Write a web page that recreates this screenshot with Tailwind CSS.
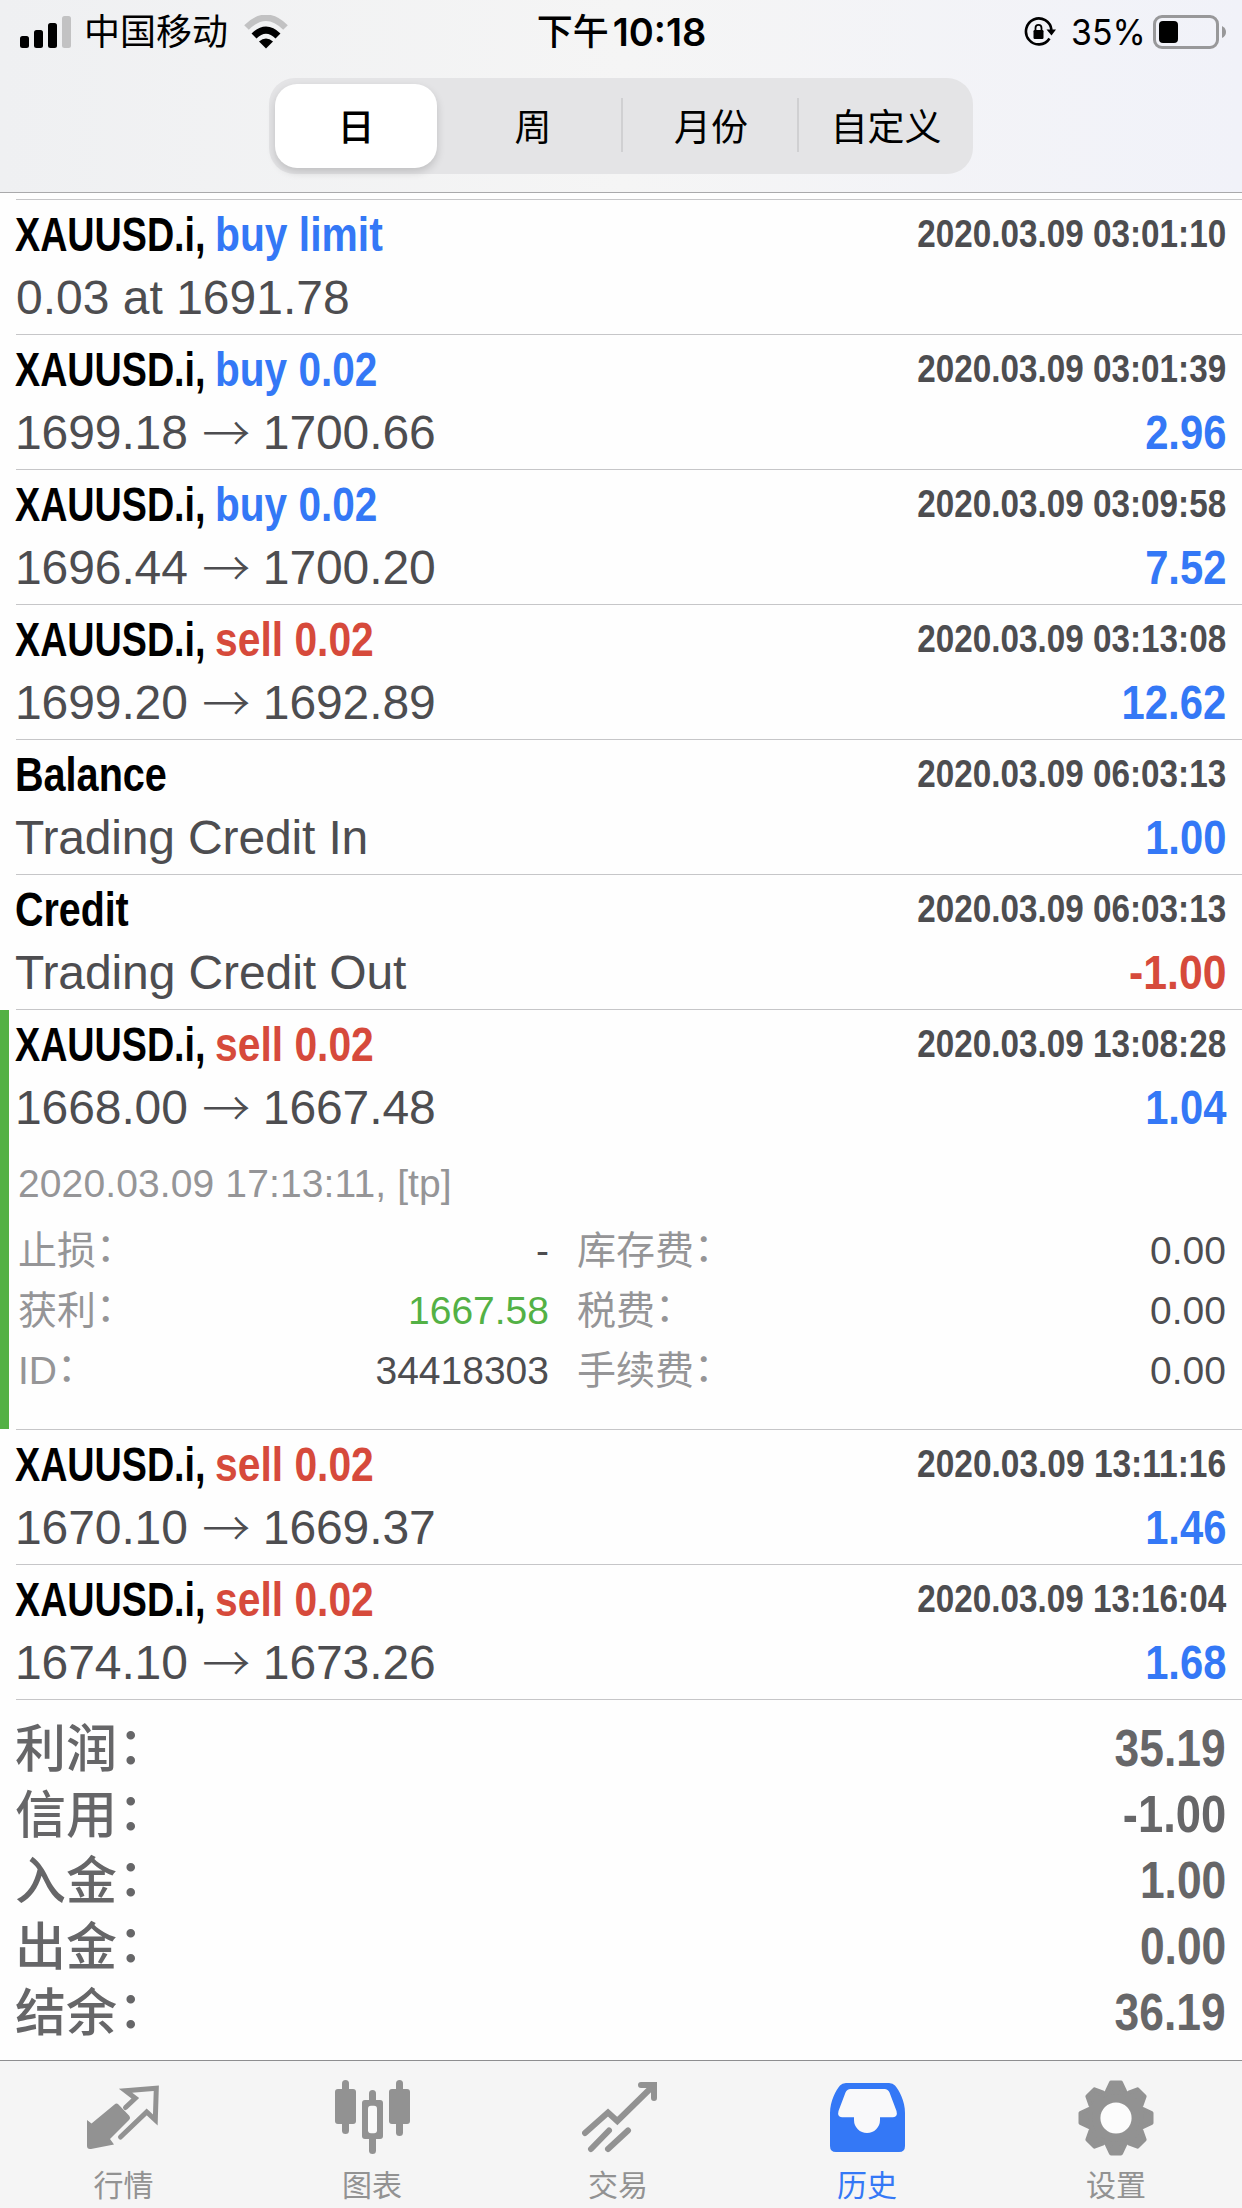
<!DOCTYPE html>
<html lang="zh-CN">
<head>
<meta charset="utf-8">
<title>历史</title>
<script src="https://cdn.jsdelivr.net/npm/@tailwindcss/browser@4"></script>
</head>
<body class="bg-white">
<div class="w-[1242px] h-[2208px] flex flex-col overflow-hidden bg-[#fefefe] font-['Liberation_Sans','Noto_Sans_CJK_SC',sans-serif] text-[48px] text-[#4d4d50] whitespace-nowrap">

  <header class="h-[193px] shrink-0 border-b border-[#a9a9ab] bg-linear-to-r from-[#eff0f2] via-[#f5f5f5] to-[#f1f2f9] text-black">
    <div class="h-[62px] grid grid-cols-3 items-center pl-5 pr-[15px] font-['Inter','Noto_Sans_CJK_SC',sans-serif] text-[36px] leading-[62px]">
      <div class="flex items-center">
        <svg class="w-[51px] h-8" viewBox="0 0 51 32"><rect x="0" y="20" width="9" height="12" rx="2.5"/><rect x="14" y="14" width="9" height="18" rx="2.5"/><rect x="28" y="7" width="9" height="25" rx="2.5"/><rect x="42" y="0" width="9" height="32" rx="2.5" fill="#c2c2c3"/></svg>
        <span class="ml-[13px] pt-px">中国移动</span>
        <svg class="ml-4 w-11 h-[34px]" viewBox="0 0 44 34"><path d="M2.5 12.5Q22 -7 41.500 12.500" fill="none" stroke="#c2c2c3" stroke-width="6.500"/><path d="M10 21Q22 9 34 21" fill="none" stroke="#000" stroke-width="7"/><path d="M15 26.500Q22 20.500 29 26.500L22 33.500Z"/></svg>
      </div>
      <div class="flex justify-center pr-1"><span class="font-medium">下午</span><span class="ml-1 text-[38px] font-semibold">10:18</span></div>
      <div class="flex items-center justify-end">
        <svg class="w-8 h-[30px]" viewBox="0 0 32 30"><path d="M25.500 21.500A12.800 13 0 1 1 27.500 13" fill="none" stroke="#000" stroke-width="2.600"/><path d="M22.500 12.500H32L27.500 18.500Z"/><rect x="9.500" y="13" width="10" height="9" rx="1.200"/><path d="M11.500 13.500V11a3 3.200 0 0 1 6 0v2.500" fill="none" stroke="#000" stroke-width="1.800"/></svg>
        <span class="ml-[15px] w-[76px]"><span class="inline-block origin-left scale-x-[0.94]">35%</span></span>
        <svg class="ml-1.5 w-[74px] h-[34px]" viewBox="0 0 74 34"><rect x="1.500" y="1.500" width="63" height="31" rx="7.500" fill="none" stroke="#98989a" stroke-width="3"/><rect x="6" y="6" width="19" height="22" rx="4"/><path d="M69 11Q73 13 73 17T69 23Z" fill="#98989a"/></svg>
      </div>
    </div>
    <div class="mt-4 mx-auto w-[704px] h-24 rounded-[26px] bg-[#e4e4e6] py-1.5 grid grid-cols-4 items-center text-center text-[37px] leading-[90px]">
      <div class="ml-1.5 h-[84px] w-[162px] rounded-[22px] bg-white shadow-[0_4px_8px_rgba(0,0,0,0.16)] font-medium">日</div>
      <div class="h-[84px]">周</div>
      <div class="h-[84px] pl-1 relative before:absolute before:left-0 before:top-[14px] before:h-[54px] before:w-[2px] before:bg-[#d0d0d2] after:absolute after:-right-0.5 after:top-[14px] after:h-[54px] after:w-[2px] after:bg-[#d0d0d2]">月份</div>
      <div class="h-[84px] pl-0.5">自定义</div>
    </div>
  </header>

  <main class="flex-1 pt-[6px]">
    <div class="ml-4 border-t border-[#c6c6c8]">

      <div class="h-[135px] border-b border-[#c6c6c8] pt-[5px] pr-4">
        <div class="h-[60px] leading-[60px] flex justify-between font-bold"><div class="flex -ml-px"><span class="w-[200px] text-black origin-left scale-x-[0.785]">XAUUSD.i,</span><span class="text-[#3478f6] origin-left scale-x-[0.85]">buy limit</span></div><div class="text-[39px] leading-[58px] origin-right scale-x-[0.853]">2020.03.09 03:01:10</div></div>
        <div class="h-[66px] leading-[66px]">0.03 at 1691.78</div>
      </div>

      <div class="h-[135px] border-b border-[#c6c6c8] pt-[5px] pr-4">
        <div class="h-[60px] leading-[60px] flex justify-between font-bold"><div class="flex -ml-px"><span class="w-[200px] text-black origin-left scale-x-[0.785]">XAUUSD.i,</span><span class="text-[#3478f6] origin-left scale-x-[0.845]">buy 0.02</span></div><div class="text-[39px] leading-[58px] origin-right scale-x-[0.853]">2020.03.09 03:01:39</div></div>
        <div class="h-[66px] leading-[66px] flex justify-between"><div class="flex -ml-px tracking-[-0.1px]"><span>1699.18</span><span class="w-[75px] pl-0.5 leading-[61px] text-center font-light font-['Noto_Sans_CJK_SC']">→</span><span>1700.66</span></div><div class="font-bold text-[#3478f6] origin-right scale-x-[0.87]">2.96</div></div>
      </div>

      <div class="h-[135px] border-b border-[#c6c6c8] pt-[5px] pr-4">
        <div class="h-[60px] leading-[60px] flex justify-between font-bold"><div class="flex -ml-px"><span class="w-[200px] text-black origin-left scale-x-[0.785]">XAUUSD.i,</span><span class="text-[#3478f6] origin-left scale-x-[0.845]">buy 0.02</span></div><div class="text-[39px] leading-[58px] origin-right scale-x-[0.853]">2020.03.09 03:09:58</div></div>
        <div class="h-[66px] leading-[66px] flex justify-between"><div class="flex -ml-px tracking-[-0.1px]"><span>1696.44</span><span class="w-[75px] pl-0.5 leading-[61px] text-center font-light font-['Noto_Sans_CJK_SC']">→</span><span>1700.20</span></div><div class="font-bold text-[#3478f6] origin-right scale-x-[0.87]">7.52</div></div>
      </div>

      <div class="h-[135px] border-b border-[#c6c6c8] pt-[5px] pr-4">
        <div class="h-[60px] leading-[60px] flex justify-between font-bold"><div class="flex -ml-px"><span class="w-[200px] text-black origin-left scale-x-[0.785]">XAUUSD.i,</span><span class="text-[#d64a3b] origin-left scale-x-[0.85]">sell 0.02</span></div><div class="text-[39px] leading-[58px] origin-right scale-x-[0.853]">2020.03.09 03:13:08</div></div>
        <div class="h-[66px] leading-[66px] flex justify-between"><div class="flex -ml-px tracking-[-0.1px]"><span>1699.20</span><span class="w-[75px] pl-0.5 leading-[61px] text-center font-light font-['Noto_Sans_CJK_SC']">→</span><span>1692.89</span></div><div class="font-bold text-[#3478f6] origin-right scale-x-[0.87]">12.62</div></div>
      </div>

      <div class="h-[135px] border-b border-[#c6c6c8] pt-[5px] pr-4">
        <div class="h-[60px] leading-[60px] flex justify-between font-bold"><div class="-ml-px text-black origin-left scale-x-[0.825]">Balance</div><div class="text-[39px] leading-[58px] origin-right scale-x-[0.853]">2020.03.09 06:03:13</div></div>
        <div class="h-[66px] leading-[66px] flex justify-between"><div class="-ml-px tracking-[-0.15px]">Trading Credit In</div><div class="font-bold text-[#3478f6] origin-right scale-x-[0.87]">1.00</div></div>
      </div>

      <div class="h-[135px] border-b border-[#c6c6c8] pt-[5px] pr-4">
        <div class="h-[60px] leading-[60px] flex justify-between font-bold"><div class="-ml-px text-black origin-left scale-x-[0.82]">Credit</div><div class="text-[39px] leading-[58px] origin-right scale-x-[0.853]">2020.03.09 06:03:13</div></div>
        <div class="h-[66px] leading-[66px] flex justify-between"><div class="-ml-px tracking-[-0.1px]">Trading Credit Out</div><div class="font-bold text-[#d64a3b] origin-right scale-x-[0.89]">-1.00</div></div>
      </div>

      <div class="relative h-[420px] border-b border-[#c6c6c8] pt-[5px] pr-4">
        <div class="absolute -left-4 top-0 h-full w-[9px] bg-[#53b145]"></div>
        <div class="h-[60px] leading-[60px] flex justify-between font-bold"><div class="flex -ml-px"><span class="w-[200px] text-black origin-left scale-x-[0.785]">XAUUSD.i,</span><span class="text-[#d64a3b] origin-left scale-x-[0.85]">sell 0.02</span></div><div class="text-[39px] leading-[58px] origin-right scale-x-[0.853]">2020.03.09 13:08:28</div></div>
        <div class="h-[66px] leading-[66px] flex justify-between"><div class="flex -ml-px tracking-[-0.1px]"><span>1668.00</span><span class="w-[75px] pl-0.5 leading-[61px] text-center font-light font-['Noto_Sans_CJK_SC']">→</span><span>1667.48</span></div><div class="font-bold text-[#3478f6] origin-right scale-x-[0.87]">1.04</div></div>
        <div class="mt-[11px] h-[69px] leading-[64px] pl-0.5 text-[39px] text-[#959597] tracking-[0.12px]">2020.03.09 17:13:11, [tp]</div>
        <div class="grid grid-cols-[531px_1fr] gap-x-[28px] text-[39px] leading-[60px] pl-0.5">
          <div class="h-[60px] flex justify-between"><span class="text-[#959597]">止损<span class="inline-block -translate-y-[3px]">：</span></span><span>-</span></div>
          <div class="h-[60px] flex justify-between"><span class="text-[#959597]">库存费<span class="inline-block -translate-y-[3px]">：</span></span><span>0.00</span></div>
          <div class="h-[60px] flex justify-between"><span class="text-[#959597]">获利<span class="inline-block -translate-y-[3px]">：</span></span><span class="text-[#53b145]">1667.58</span></div>
          <div class="h-[60px] flex justify-between"><span class="text-[#959597]">税费<span class="inline-block -translate-y-[3px]">：</span></span><span>0.00</span></div>
          <div class="h-[60px] flex justify-between"><span class="text-[#959597]">ID<span class="inline-block -translate-y-[3px]">：</span></span><span>34418303</span></div>
          <div class="h-[60px] flex justify-between"><span class="text-[#959597]">手续费<span class="inline-block -translate-y-[3px]">：</span></span><span>0.00</span></div>
        </div>
      </div>

      <div class="h-[135px] border-b border-[#c6c6c8] pt-[5px] pr-4">
        <div class="h-[60px] leading-[60px] flex justify-between font-bold"><div class="flex -ml-px"><span class="w-[200px] text-black origin-left scale-x-[0.785]">XAUUSD.i,</span><span class="text-[#d64a3b] origin-left scale-x-[0.85]">sell 0.02</span></div><div class="text-[39px] leading-[58px] origin-right scale-x-[0.858]">2020.03.09 13:11:16</div></div>
        <div class="h-[66px] leading-[66px] flex justify-between"><div class="flex -ml-px tracking-[-0.1px]"><span>1670.10</span><span class="w-[75px] pl-0.5 leading-[61px] text-center font-light font-['Noto_Sans_CJK_SC']">→</span><span>1669.37</span></div><div class="font-bold text-[#3478f6] origin-right scale-x-[0.87]">1.46</div></div>
      </div>

      <div class="h-[135px] border-b border-[#c6c6c8] pt-[5px] pr-4">
        <div class="h-[60px] leading-[60px] flex justify-between font-bold"><div class="flex -ml-px"><span class="w-[200px] text-black origin-left scale-x-[0.785]">XAUUSD.i,</span><span class="text-[#d64a3b] origin-left scale-x-[0.85]">sell 0.02</span></div><div class="text-[39px] leading-[58px] origin-right scale-x-[0.853]">2020.03.09 13:16:04</div></div>
        <div class="h-[66px] leading-[66px] flex justify-between"><div class="flex -ml-px tracking-[-0.1px]"><span>1674.10</span><span class="w-[75px] pl-0.5 leading-[61px] text-center font-light font-['Noto_Sans_CJK_SC']">→</span><span>1673.26</span></div><div class="font-bold text-[#3478f6] origin-right scale-x-[0.87]">1.68</div></div>
      </div>

      <div class="pt-[16px] pr-4 text-[51px] leading-[66px] text-[#666668]">
        <div class="h-[66px] flex justify-between"><span class="pt-px -ml-px font-medium">利润<span class="inline-block translate-x-px -translate-y-[3px]">：</span></span><span class="font-bold origin-right scale-x-[0.87]">35.19</span></div>
        <div class="h-[66px] flex justify-between"><span class="pt-px -ml-px font-medium">信用<span class="inline-block translate-x-px -translate-y-[3px]">：</span></span><span class="font-bold origin-right scale-x-[0.89]">-1.00</span></div>
        <div class="h-[66px] flex justify-between"><span class="pt-px -ml-px font-medium">入金<span class="inline-block translate-x-px -translate-y-[3px]">：</span></span><span class="font-bold origin-right scale-x-[0.87]">1.00</span></div>
        <div class="h-[66px] flex justify-between"><span class="pt-px -ml-px font-medium">出金<span class="inline-block translate-x-px -translate-y-[3px]">：</span></span><span class="font-bold origin-right scale-x-[0.87]">0.00</span></div>
        <div class="h-[66px] flex justify-between"><span class="pt-px -ml-px font-medium">结余<span class="inline-block translate-x-px -translate-y-[3px]">：</span></span><span class="font-bold origin-right scale-x-[0.87]">36.19</span></div>
      </div>
    </div>
  </main>

  <nav class="h-[148px] shrink-0 border-t border-[#8e8e90] bg-[#f5f5f5] flex text-[30px] leading-[44px] text-[#929292]">
    <div class="w-[248px] pt-[19px] flex flex-col items-center">
      <svg class="w-[76px] h-[76px] mb-[8px]" viewBox="0 0 76 76"><path d="M1 40L5.500 43.500L28.500 24.500Q30.500 22.700 32.500 24.500L43 35.500Q45 38 43 40L24 59L28 64.500L5 69Q1 69.500 1 66Z" fill="currentColor"/><path d="M39.500 27.500L49.300 18.300L39.500 10.800L70.300 8.300L69.300 40L60.700 32L34.500 57" fill="none" stroke="currentColor" stroke-width="5" stroke-linecap="round"/></svg>
      <span class="-ml-px">行情</span>
    </div>
    <div class="w-[248px] pt-[19px] flex flex-col items-center">
      <svg class="w-[76px] h-[76px] mb-[8px]" viewBox="0 0 76 76" fill="currentColor"><rect x="1" y="9" width="21" height="35" rx="3"/><rect x="8" y="0" width="7" height="54" rx="3.500"/><rect x="28" y="20" width="21" height="39" rx="3"/><rect x="35" y="10" width="7" height="64" rx="3.500"/><rect x="34" y="25.700" width="9" height="27.500" rx="3" fill="#fafafa"/><rect x="55" y="9" width="21" height="35" rx="3"/><rect x="62" y="0" width="7" height="56" rx="3.500"/></svg>
      <span>图表</span>
    </div>
    <div class="w-[248px] pt-[19px] flex flex-col items-center">
      <svg class="w-[76px] h-[76px] mb-[8px]" viewBox="0 0 76 76" fill="none" stroke="currentColor" stroke-width="6" stroke-linecap="round"><path d="M3 53L26 32.500L35.300 41L71 6M59 5H72V18M9 69L27 50.500M26 69L46 50.500"/></svg>
      <span class="-ml-1">交易</span>
    </div>
    <div class="w-[248px] pt-[19px] flex flex-col items-center text-[#3478f6]">
      <svg class="w-[76px] h-[76px] mb-[8px]" viewBox="0 0 76 76"><path d="M0 66V33C0 21 6 10 10 5.500Q12 3 16 3H59Q63 3 65 5.500C69 10 75 21 75 33V66Q75 72 69 72H6Q0 72 0 66Z" fill="currentColor"/><path d="M20.500 9H54.500Q58 9 59.500 12.500L66.500 31Q68 37 63 37.300H50V40A13 13 0 0 1 24 40V37.300H12Q7 37 8.500 31L15.500 12.500Q17 9 20.500 9Z" fill="#f9f9fa"/></svg>
      <span class="-ml-0.5">历史</span>
    </div>
    <div class="w-[248px] pt-[19px] flex flex-col items-center">
      <svg class="w-[76px] h-[76px] mb-[8px]" viewBox="-38 -38 76 76" fill="currentColor" stroke="currentColor" stroke-width="4" stroke-linejoin="round"><path d="M-9 -27L-5 -35.500H5L9 -27V27L5 35.500H-5L-9 27Z"/><path transform="rotate(45)" d="M-9 -27L-5 -35.500H5L9 -27V27L5 35.500H-5L-9 27Z"/><path transform="rotate(90)" d="M-9 -27L-5 -35.500H5L9 -27V27L5 35.500H-5L-9 27Z"/><path transform="rotate(135)" d="M-9 -27L-5 -35.500H5L9 -27V27L5 35.500H-5L-9 27Z"/><circle r="26"/><circle r="15.600" fill="#fcfcfc" stroke="none"/></svg>
      <span>设置</span>
    </div>
  </nav>
</div>
</body>
</html>
